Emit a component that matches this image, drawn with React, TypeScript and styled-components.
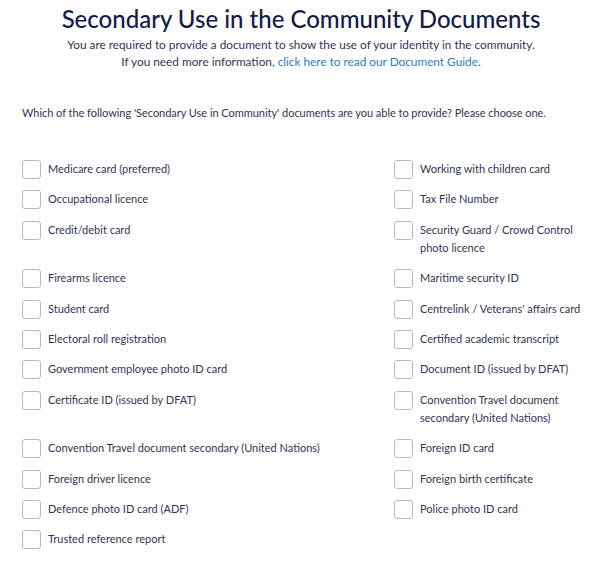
import React from 'react';
import styled, { createGlobalStyle } from 'styled-components';

const GlobalStyle = createGlobalStyle`
  html, body {
    margin: 0;
    padding: 0;
    background: #ffffff;
  }
  body {
    font-family: Lato, "Noto Sans", sans-serif;
    color: #2f3552;
  }
`;

const Page = styled.div`
  padding: 4px 8px 0 22px;
`;

const Header = styled.header`
  padding-right: 14px;
`;

const Title = styled.h1`
  margin: 0;
  text-align: center;
  font-size: 24px;
  line-height: 30px;
  font-weight: 500;
  color: #141a4a;
`;

const Intro = styled.p`
  margin: 2px 0 0 0;
  text-align: center;
  font-size: 11.8px;
  line-height: 17px;
`;

const Link = styled.a`
  color: #2b7cc0;
  text-decoration: none;
`;

const Question = styled.p`
  margin: 34px 0 0 0;
  font-size: 11px;
  line-height: 17px;
  letter-spacing: -0.04px;
`;

const OptionGrid = styled.div`
  display: grid;
  grid-template-columns: 372px 1fr;
  grid-template-rows: repeat(12, auto);
  row-gap: 11.4px;
  margin-top: 39px;
`;

const Option = styled.label<{ $col: number; $row: number }>`
  display: flex;
  align-items: flex-start;
  gap: 7px;
  grid-column: ${(p) => p.$col};
  grid-row: ${(p) => p.$row};
  font-size: 11px;
  line-height: 18.5px;
  cursor: pointer;
`;

const Box = styled.input.attrs({ type: 'checkbox' })`
  appearance: none;
  flex: none;
  width: 19px;
  height: 19px;
  margin: 0;
  border: 1px solid #b9b9b9;
  border-radius: 3px;
  background: #fff;
`;

const Label = styled.span<{ $narrow?: boolean }>`
  max-width: ${(p) => (p.$narrow ? '168px' : 'none')};
`;

const left = [
  'Medicare card (preferred)',
  'Occupational licence',
  'Credit/debit card',
  'Firearms licence',
  'Student card',
  'Electoral roll registration',
  'Government employee photo ID card',
  'Certificate ID (issued by DFAT)',
  'Convention Travel document secondary (United Nations)',
  'Foreign driver licence',
  'Defence photo ID card (ADF)',
  'Trusted reference report',
];

const right = [
  'Working with children card',
  'Tax File Number',
  'Security Guard / Crowd Control photo licence',
  'Maritime security ID',
  'Centrelink / Veterans\' affairs card',
  'Certified academic transcript',
  'Document ID (issued by DFAT)',
  'Convention Travel document secondary (United Nations)',
  'Foreign ID card',
  'Foreign birth certificate',
  'Police photo ID card',
];

export default function App() {
  return (
    <>
      <GlobalStyle />
      <Page>
        <Header>
          <Title>Secondary Use in the Community Documents</Title>
          <Intro>
            You are required to provide a document to show the use of your identity in the community.
            <br />
            If you need more information, <Link href="#">click here to read our Document Guide</Link>.
          </Intro>
        </Header>
        <Question>
          Which of the following 'Secondary Use in Community' documents are you able to provide? Please choose one.
        </Question>
        <OptionGrid>
          {left.map((text, i) => (
            <Option key={'l' + i} $col={1} $row={i + 1}>
              <Box />
              <Label>{text}</Label>
            </Option>
          ))}
          {right.map((text, i) => (
            <Option key={'r' + i} $col={2} $row={i + 1}>
              <Box />
              <Label $narrow>{text}</Label>
            </Option>
          ))}
        </OptionGrid>
      </Page>
    </>
  );
}
